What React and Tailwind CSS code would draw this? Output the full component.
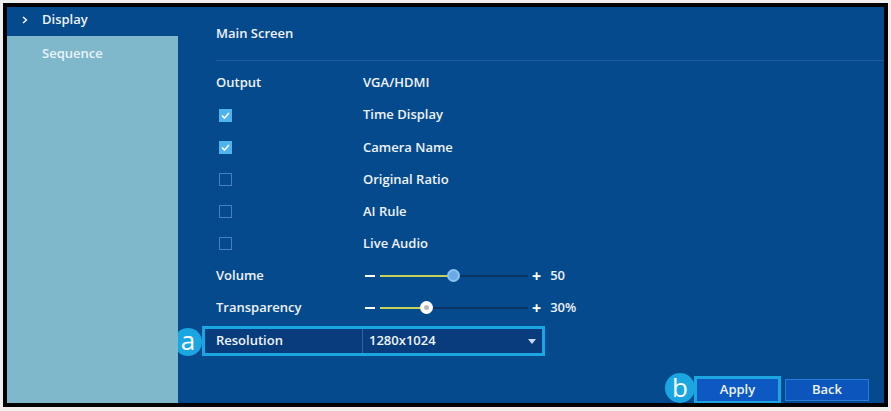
import React from 'react';

const Check = ({ on }) =>
  on ? (
    <div className="w-[13px] h-[13px] bg-[#4fb3ef] flex items-center justify-center ml-[3px]">
      <svg width="9" height="7" viewBox="0 0 9 7" fill="none">
        <path d="M1 3.5 L3.5 6 L8 1" stroke="white" strokeWidth="1.6" />
      </svg>
    </div>
  ) : (
    <div className="w-[13px] h-[13px] border-[1.5px] border-[#4680bd] ml-[3px]" />
  );

const Slider = ({ pct, value, knob }) => (
  <div className="flex items-center">
    <div className="w-[10px] h-[2px] bg-white ml-[2px]" />
    <div className="relative w-[148px] h-[2px] bg-[#0c3566] ml-[5px]">
      <div className="absolute left-0 top-0 h-[2px] bg-[#c6d25c]" style={{ width: `${pct}%` }} />
      {knob === 'blue' ? (
        <div
          className="absolute top-[-6px] w-[13px] h-[13px] rounded-full bg-[#6aa8e6] border-[2px] border-[#8cc2f2] -ml-[6px]"
          style={{ left: `${pct}%` }}
        />
      ) : (
        <div
          className="absolute top-[-6px] w-[13px] h-[13px] rounded-full bg-white flex items-center justify-center -ml-[6px]"
          style={{ left: `${pct}%` }}
        >
          <div className="w-[5px] h-[5px] rounded-full bg-[#b8b8b8]" />
        </div>
      )}
    </div>
    <span className="ml-[4px] text-[16px] font-bold leading-none text-white">+</span>
    <span className="ml-[9px]">{value}</span>
  </div>
);

const Row = ({ label, children }) => (
  <div className="flex items-center h-[32.15px]">
    <div className="w-[147px]">{label}</div>
    <div>{children}</div>
  </div>
);

export default function App() {
  return (
    <div
      className="w-[891px] h-[411px] bg-[#f1efed] pt-[3px] pl-[3px] text-[13px] font-semibold text-[#eef3f8]"
      style={{ fontFamily: '"Open Sans", "Noto Sans", sans-serif' }}
    >
      <div className="w-[885px] h-[404px] border-[4px] border-black flex">
        {/* sidebar */}
        <div className="w-[171px] bg-[#80b8cb] flex flex-col">
          <div className="h-[29px] bg-[#064a8e] flex items-center pl-[15px] pb-[3px]">
            <svg width="6" height="8" viewBox="0 0 6 8" fill="none">
              <path d="M1 1 L4.5 4 L1 7" stroke="white" strokeWidth="1.4" />
            </svg>
            <span className="ml-[14px]">Display</span>
          </div>
          <div className="pl-[35px] pt-[8px] text-[#e8f3f8]">Sequence</div>
        </div>

        {/* main */}
        <div className="flex-1 bg-[#064a8e] flex flex-col overflow-hidden">
          <div className="h-[53px] flex items-center pl-[38px]">Main Screen</div>
          <div className="ml-[38px] h-[1px] bg-[#205f9f]" />
          <div className="pl-[38px] mt-[6px]">
            <Row label="Output">VGA/HDMI</Row>
            <Row label={<Check on />}>Time Display</Row>
            <Row label={<Check on />}>Camera Name</Row>
            <Row label={<Check />}>Original Ratio</Row>
            <Row label={<Check />}>AI Rule</Row>
            <Row label={<Check />}>Live Audio</Row>
            <Row label="Volume">
              <Slider pct={49} value="50" knob="blue" />
            </Row>
            <Row label="Transparency">
              <Slider pct={31} value="30%" knob="white" />
            </Row>
          </div>

          <div className="relative mt-[2px] ml-[24px] w-[343px] h-[30px] border-[3px] border-[#1ba6e2]">
            <div className="absolute left-[-31px] top-[-1px] w-[28px] h-[28px] rounded-full bg-[#1ba6e2] flex items-center justify-center text-white text-[26px] font-normal leading-none pb-[4px]">
              a
            </div>
            <div className="h-full bg-[#083c7c] flex items-center">
              <div className="w-[158px] pl-[11px] h-full flex items-center border-r border-[#2d63a0]">
                Resolution
              </div>
              <div className="flex-1 pl-[6px] flex items-center justify-between pr-[6px]">
                <span>1280x1024</span>
                <svg width="8" height="5" viewBox="0 0 8 5">
                  <path d="M0 0 H8 L4 5 Z" fill="#c9d9ee" />
                </svg>
              </div>
            </div>
          </div>

          <div className="mt-auto flex items-end justify-end pr-[15px]">
            <div className="w-[30px] h-[30px] rounded-full bg-[#1ba6e2] flex items-center justify-center text-white text-[26px] font-normal leading-none pb-[3px] mr-[-1px]">
              b
            </div>
            <div className="border-[3px] border-b-[2px] border-[#1ba6e2] h-[27px]">
              <div className="w-[81px] h-[22px] bg-[#0d58c2] flex items-center justify-center">Apply</div>
            </div>
            <div className="ml-[4px] mb-[2px] w-[84px] h-[22px] bg-[#0b55bd] border border-[#2b7ad9] flex items-center justify-center">
              Back
            </div>
          </div>
        </div>
      </div>
    </div>
  );
}
